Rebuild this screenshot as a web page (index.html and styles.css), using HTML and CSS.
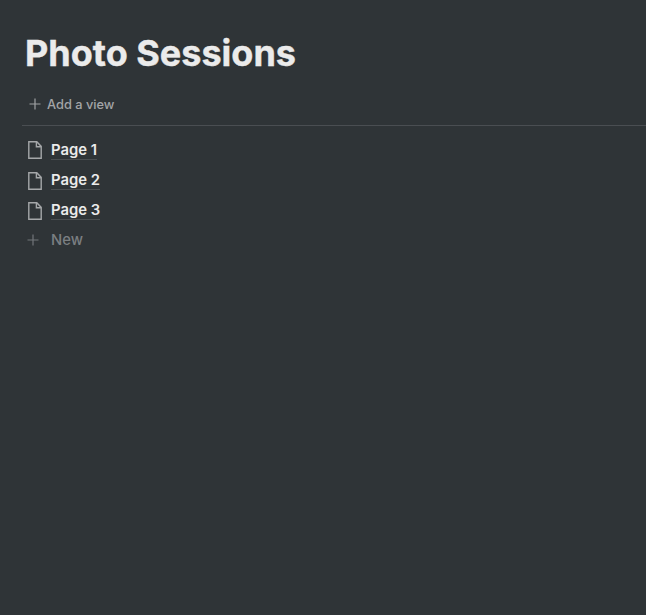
FILE: index.html
```html
<!DOCTYPE html>
<html lang="en">
<head>
    <meta charset="UTF-8">
    <meta name="viewport" content="width=device-width, initial-scale=1.0">
    <title>Photo Sessions</title>
    <link rel="stylesheet" href="styles.css">
</head>
<body>

    <h1 class="title">Photo Sessions</h1>

    <div class="views">
        <svg class="plus" viewBox="0 0 12 12"><path d="M6 .5v11M.5 6h11"/></svg>
        <span>Add a view</span>
    </div>

    <div class="list">
        <div class="row">
            <svg class="doc" viewBox="0 0 14 18"><path d="M.8.8h8l4.4 4.6v11.8H.8zM8.4.8v5h4.8"/></svg>
            <span class="name">Page 1</span>
        </div>
        <div class="row">
            <svg class="doc" viewBox="0 0 14 18"><path d="M.8.8h8l4.4 4.6v11.8H.8zM8.4.8v5h4.8"/></svg>
            <span class="name">Page 2</span>
        </div>
        <div class="row">
            <svg class="doc" viewBox="0 0 14 18"><path d="M.8.8h8l4.4 4.6v11.8H.8zM8.4.8v5h4.8"/></svg>
            <span class="name">Page 3</span>
        </div>
        <div class="row new">
            <svg class="plus" viewBox="0 0 12 12"><path d="M6 .5v11M.5 6h11"/></svg>
            <span>New</span>
        </div>
    </div>

</body>
</html>
```

FILE: styles.css
```css
html, body {
    height: 100%;
}
body {
    margin: 0;
    padding: 33px 0 0 22px;
    box-sizing: border-box;
    overflow: hidden;
    background-color: #2f3437;
    font-family: Inter, "Liberation Sans", sans-serif;
}
.title {
    margin: 0 0 0 3px;
    font-size: 36px;
    line-height: 40px;
    font-weight: 700;
    color: #ebebeb;
    -webkit-text-stroke: 0.4px #ebebeb;
}
.views {
    display: flex;
    align-items: center;
    height: 24px;
    margin-top: 19px;
    padding: 0 0 9px 7px;
    border-bottom: 1px solid #4a4e52;
    font-size: 12.8px;
    font-weight: 500;
    color: #a3a5a7;
}
.views .plus {
    width: 12px;
    height: 12px;
    margin-right: 6px;
    stroke: #a0a2a4;
    stroke-width: 1.2;
}
.list {
    padding: 9px 0 0 6px;
}
.row {
    display: flex;
    align-items: center;
    height: 30.4px;
}
.doc {
    width: 14px;
    height: 18px;
    margin-right: 9px;
    fill: none;
    stroke: #a5a7a9;
    stroke-width: 1.4;
}
.name {
    font-size: 14.8px;
    font-weight: 600;
    line-height: 18px;
    color: #ebebeb;
    border-bottom: 1px solid #4a4e51;
}
.new {
    height: 27px;
    font-size: 14.8px;
    font-weight: 500;
    color: #7b7f82;
}
.new .plus {
    width: 12px;
    height: 12px;
    margin-left: -1px;
    margin-right: 12px;
    stroke: #72767a;
    stroke-width: 1.2;
}
```
